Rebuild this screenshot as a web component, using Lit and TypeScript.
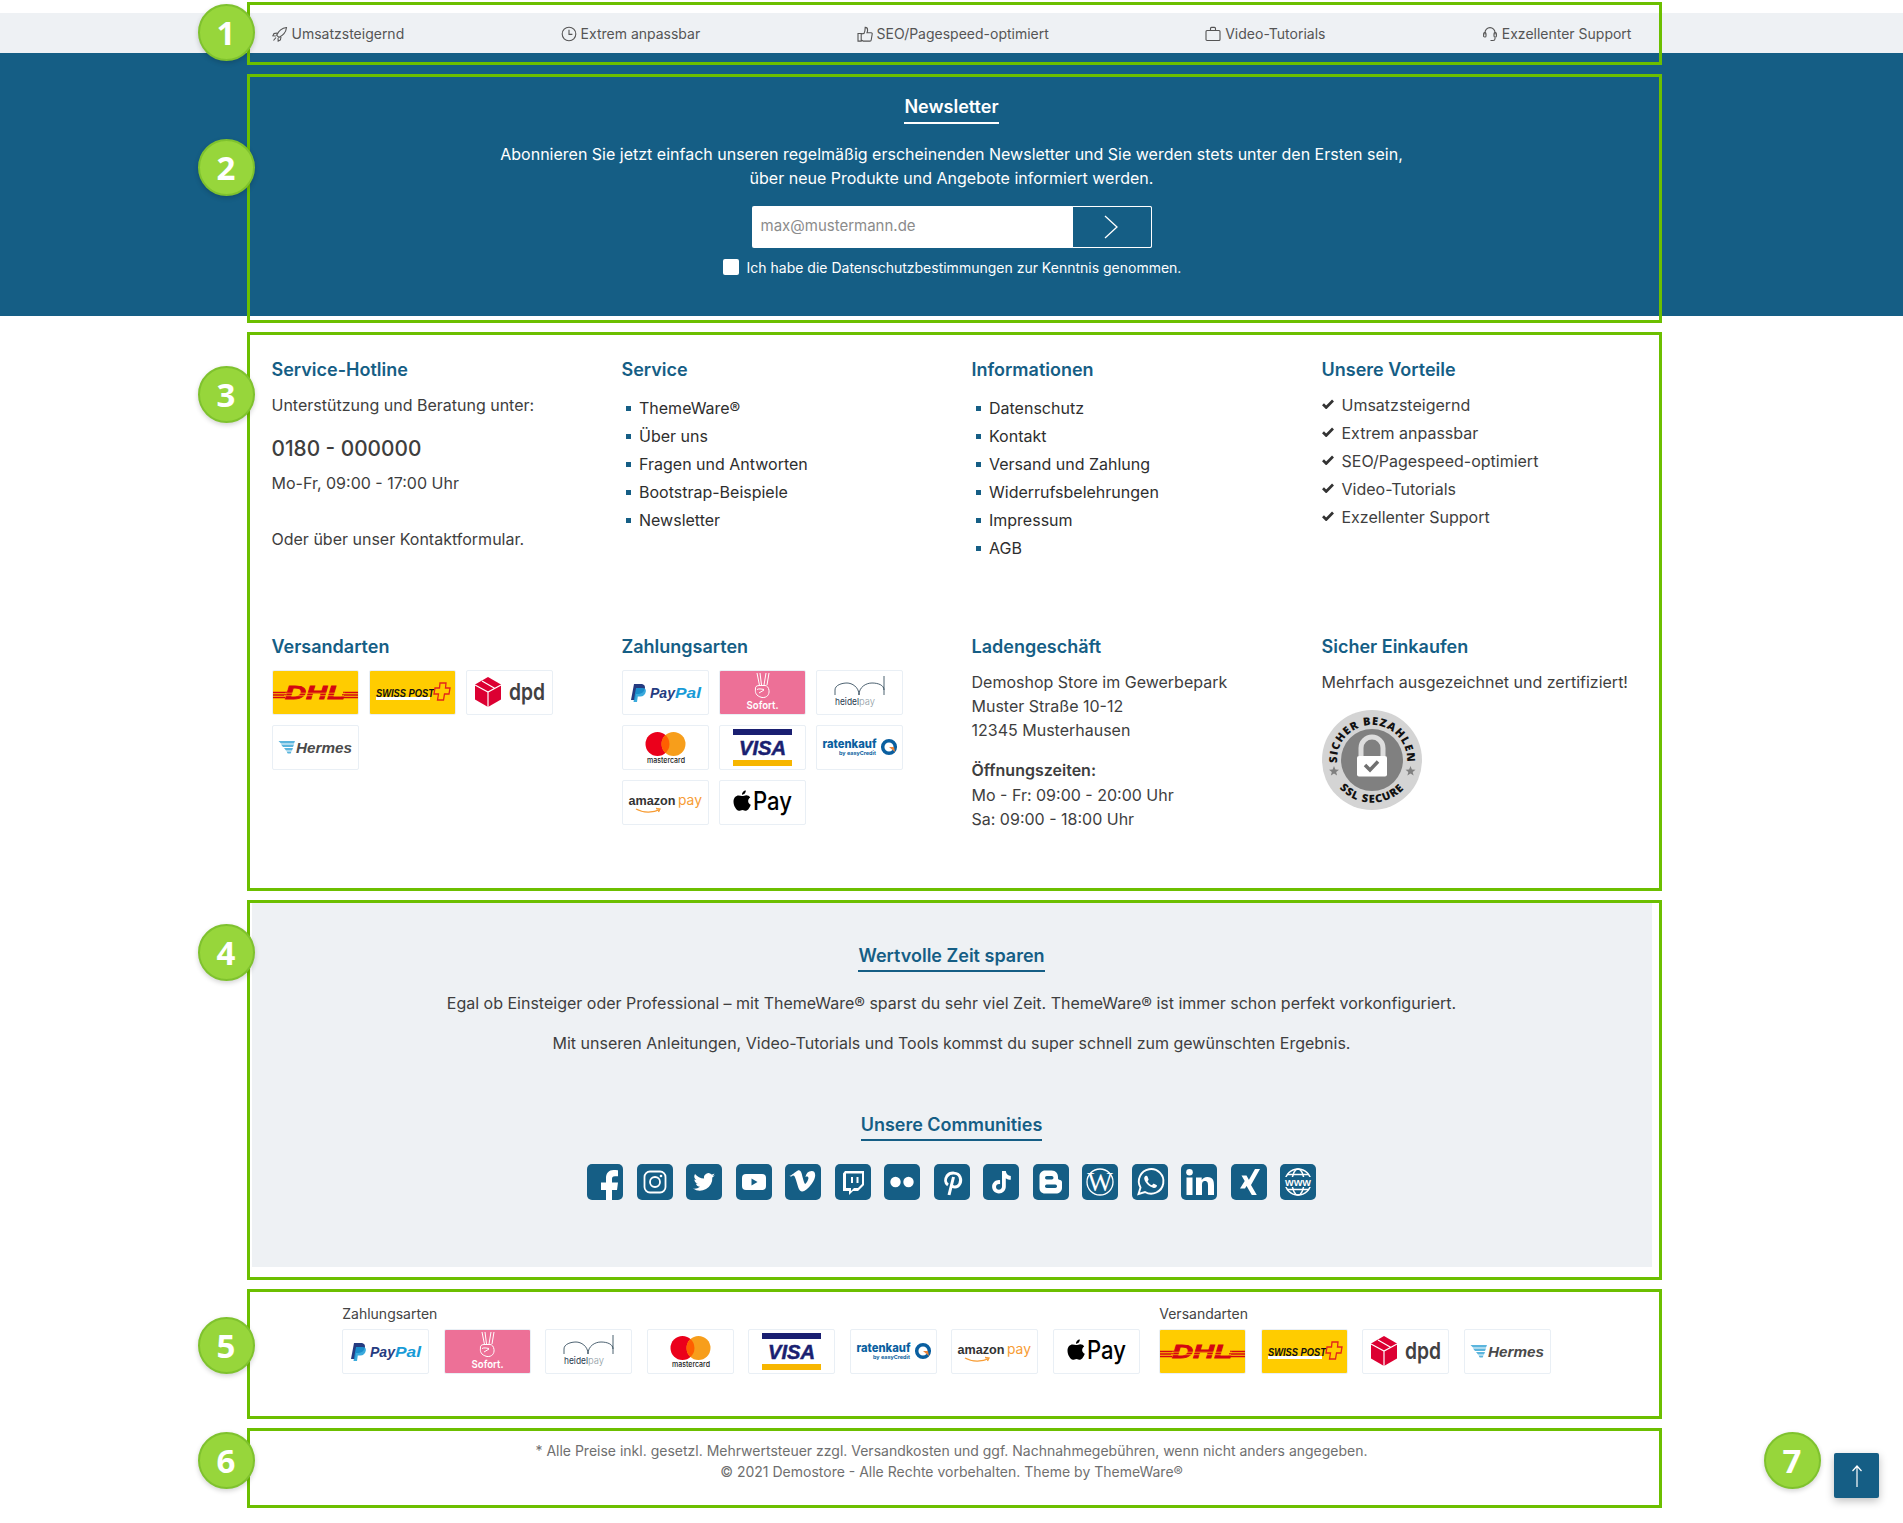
import { LitElement, html, css, svg } from "lit";
import { customElement } from "lit/decorators.js";

const BLUE = "#155e85";

const usp = [
  ["rocket", "Umsatzsteigernd"],
  ["clock", "Extrem anpassbar"],
  ["thumb", "SEO/Pagespeed-optimiert"],
  ["bag", "Video-Tutorials"],
  ["head", "Exzellenter Support"],
];

const uspIcon = (n: string) => {
  const p: Record<string, unknown> = {
    rocket: svg`<path d="M14.5 1.500C10 2 6.500 5 4.600 9.200l2.200 2.200C11 9.500 14 6 14.500 1.500zM5 7 2 7.600.9 9.800l3 .2M9 11l-.6 3-2.200 1.100-.2-3M4 11.500 1.500 14.500" />`,
    clock: svg`<circle cx="8" cy="8" r="6.800"/><path d="M8 3.800V8.400h3.400"/>`,
    thumb: svg`<path d="M1 7.500h3.200v7.600H1zM4.200 8l2.800-.6c.9-1.600 1.200-3.600 1.200-6 1.600 0 2.400 1 2.400 2.600 0 1-.3 2-.6 2.800h4.200c.6 0 1.100.5 1 1.200l-1 6c-.1.7-.6 1.100-1.200 1.100H6.200l-2-1"/>`,
    bag: svg`<rect x="1" y="4.500" width="14" height="10" rx="1"/><path d="M5.500 4.500V2.400c0-.6.4-1 1-1h3c.6 0 1 .4 1 1v2.100"/>`,
    head: svg`<path d="M3 8.500V6.600a5 5 0 0 1 10 0v1.900M13 11.500v1.200c0 1-1 1.800-2 1.800H8.500"/><rect x="1.600" y="6.600" width="2.400" height="4.400" rx="1.100"/><rect x="12" y="6.600" width="2.400" height="4.400" rx="1.100"/>`,
  };
  return svg`<svg class="uspi" viewBox="0 0 16 16" width="16" height="16" fill="none" stroke="#555" stroke-width="1.100">${p[n]}</svg>`;
};

const SANS = "Liberation Sans, sans-serif";
const INTER = "Inter, sans-serif";
const t = (x: number, y: number, s: string, size: number, fill: string, fam = SANS, weight = 700, style = "normal", len = 0) =>
  len
    ? svg`<text x=${x} y=${y} font-size=${size} fill=${fill} font-weight=${weight} font-style=${style} font-family=${fam} textLength=${len} lengthAdjust="spacingAndGlyphs">${s}</text>`
    : svg`<text x=${x} y=${y} font-size=${size} fill=${fill} font-weight=${weight} font-style=${style} font-family=${fam}>${s}</text>`;

const logos: Record<string, () => unknown> = {
  dhl: () => svg`<rect width="87" height="45" fill="#ffcc00"/>
    <g stroke="#d40511" stroke-width=".8">${t(13, 29, "DHL", 19, "#d40511", SANS, 700, "italic", 60)}</g>
    <path d="M0 22.500h15M0 25h14M0 27.500h13M71 22.500h16M70 25h17M69 27.500h18" stroke="#d40511" stroke-width="1.300"/>
    <path d="M13 23.200h60M12 25.700h60" stroke="#ffcc00" stroke-width=".7"/>`,
  swiss: () => svg`<rect width="87" height="45" fill="#ffcc00"/>
    <rect x="7" y="27" width="54" height="3" fill="#fff"/>
    ${t(7, 26.500, "SWISS POST", 10.500, "#111", SANS, 700, "italic", 58)}
    <path d="M71 13h6l-.5 5h4.500l-1 6h-4.500l-1 6h-6l1-6h-4.500l1-6h4.500z" fill="#ffcc00" stroke="#e2231a" stroke-width="1.300"/>`,
  dpd: () => svg`<path d="M22 7l13 7.500v15L22 37 9 29.500v-15z" fill="#dc0032"/>
    <path d="M9 15l13 7 13-7M22 22v15M16 11l13 7.500" stroke="#fff" stroke-width="1.200" fill="none"/>
    ${t(43, 30, "dpd", 23, "#414042", INTER, 600, "normal", 36)}`,
  hermes: () => svg`<path d="M6.500 16h16.500l-1 2.500H9zM9 19.500h13l-1 2.500H11zM12 23h9l-1 2.500h-6zM14.500 26.500h5l-.8 2h-3z" fill="#5bb5dd"/>
    ${t(24, 27.500, "Hermes", 15, "#4a4a4a", SANS, 700, "italic", 56)}`,
  paypal: () => svg`<path d="M9 30 12 14h6.500c3.500 0 5 1.700 4.400 4.600-.7 3.600-3 5.400-6.500 5.400h-2.500L13 30z" fill="#253b80"/>
    <path d="M11.500 32 14 18h6.500c2.800 0 3.800 1.500 3.300 3.800-.6 3-2.700 4.700-5.500 4.700h-2.500L15 32z" fill="#179bd7" opacity=".85"/>
    ${t(28, 28, "Pay", 15.500, "#253b80", SANS, 700, "italic", 25)}${t(53, 28, "Pal", 15.500, "#179bd7", SANS, 700, "italic", 26)}`,
  sofort: () => svg`<rect width="87" height="45" fill="#ed7097"/>
    <g fill="none" stroke="#fff" stroke-width="1">
      <path d="M38 3l2.500 12.500M41 3l1.500 12M50 3l-2 12M47 3l-2 12M36.500 19c-.5 3 0 7 6.500 8.500 5 .5 7.500-3 7-7-.3-3-2-5-4-5h-6c-3 0-4 2-3.500 3.500M38 19.500c2-1 4-.5 7 0M40 23l5-3"/>
    </g>
    ${t(27.500, 39, "Sofort.", 11, "#fff", INTER, 600, "normal", 32)}`,
  heidel: () => svg`<g fill="none" stroke="#1f3a4d" stroke-width=".8">
      <path d="M19 25V20C19 15 26 13 31 13S43 17 43 25C43 17 50 13 56 13S68 15 68 20M68 6V25"/>
    </g>
    ${t(19, 35, "heidel", 9.500, "#1f3a4d", INTER, 400, "normal", 24)}${t(43, 35, "pay", 9.500, "#8d9aa3", INTER, 300, "normal", 16)}`,
  master: () => svg`<circle cx="35.500" cy="19" r="12" fill="#eb001b"/><circle cx="51.500" cy="19" r="12" fill="#f79e1b"/>
    <path d="M43.500 10.100a12 12 0 0 1 0 17.800 12 12 0 0 1 0-17.800z" fill="#ff5f00"/>
    ${t(25, 38, "mastercard", 7.500, "#222", INTER, 500, "normal", 38)}`,
  visa: () => svg`<rect x="14" y="4" width="59" height="6" fill="#1a1f71"/><rect x="14" y="35" width="59" height="6" fill="#f7b600"/>
    <g stroke="#1a1f71" stroke-width=".5">${t(20, 30, "VISA", 20, "#1a1f71", SANS, 700, "italic", 47)}</g>`,
  rate: () => svg`${t(6.500, 23, "ratenkauf", 12, "#0a5fa0", INTER, 800, "normal", 54)}${t(23, 30, "by easyCredit", 5, "#0a5fa0", INTER, 700, "normal", 37)}
    <circle cx="73" cy="22" r="6.300" fill="none" stroke="#0a5fa0" stroke-width="3.500"/><path d="M73 22h5l1 5z" fill="#e8833a"/>`,
  amazon: () => svg`${t(6.500, 25, "amazon", 13, "#333", SANS, 700, "normal", 47)}${t(56, 25, "pay", 14, "#f79c34", INTER, 400, "normal", 24)}
    <path d="M14 29c7 4 17 4 24 .5M34 28.500l4 .5-1.500 3" fill="none" stroke="#f79c34" stroke-width="1.300"/>`,
  apple: () => svg`<g transform="translate(0 3.500)"><path d="M23 12.500c1.800 0 3-.8 4.200-.8 1.600 0 3.200.9 4 2.300-3 1.800-2.600 6 .6 7.300-.7 2-2.800 6-4.800 6-1.400 0-2-.9-3.500-.9s-2.300.9-3.600.9c-2.300 0-5.400-4.900-5.400-9 0-4 2.500-6.200 5-6.200 1.300 0 2.500.4 3.500.4zM26.800 7c.2 2.200-1.900 4.400-3.800 4.200-.2-2.100 1.900-4.200 3.800-4.200z" fill="#000"/></g>
    ${t(34, 30, "Pay", 25, "#000", INTER, 500, "normal", 39)}`,
};

const logoBox = (k: string) => html`<span class="logo"><svg viewBox="1 1 85 43" width="85" height="43">${logos[k]()}</svg></span>`;

const R = (c: unknown) => svg`<svg viewBox="0 0 36 36" width="36" height="36" class="soc"><rect width="36" height="36" rx="5" fill="${BLUE}"/>${c}</svg>`;
const W = "#fff";
const social = [
  svg`<path d="M19 36V26h-5v-7.500h5V14c0-5 3-8 7.500-8 1.800 0 3.500.1 4.500.3v6h-3c-2.500 0-3 1.200-3 3v3.200H31l-1 7.500h-5V36z" fill=${W}/>`,
  svg`<rect x="7.500" y="7.500" width="21" height="21" rx="5.500" fill="none" stroke=${W} stroke-width="1.800"/><circle cx="18" cy="18" r="5" fill="none" stroke=${W} stroke-width="1.800"/><circle cx="24" cy="12" r="1.300" fill=${W}/>`,
  svg`<path d="M29 11.200c-.8.4-1.700.6-2.500.7.900-.5 1.600-1.400 1.900-2.400-.9.500-1.800.9-2.800 1.100a4.400 4.400 0 0 0-7.500 4c-3.700-.2-6.900-2-9.100-4.600a4.400 4.400 0 0 0 1.400 5.900c-.7 0-1.400-.2-2-.5 0 2.100 1.500 3.900 3.500 4.300-.6.200-1.300.2-2 .1.600 1.700 2.200 3 4.100 3A8.800 8.800 0 0 1 7 24.600a12.500 12.500 0 0 0 19.300-11.100c.9-.6 1.600-1.400 2.700-2.300z" fill=${W}/>`,
  svg`<rect x="6" y="10" width="24" height="16" rx="4" fill=${W}/><path d="M15.500 14.500v7l6-3.500z" fill="${BLUE}"/>`,
  svg`<path d="M5.500 12.800 7 14.700c1.500-1 2.400-1.500 2.800-1.500 1 0 2 1.600 2.900 4.800l2.500 8.300c1.200 3.200 2.700 4.800 4.400 4.800 2.900 0 6.400-2.700 10.500-8.200 2.800-4 4-7.300 4-9.900 0-3.300-1.200-4.800-3.900-4.800-3.800 0-6 2.300-7 6.800 1.800-1 3.400-.6 3.400 1.400 0 1.300-2.300 6.200-3.500 6.200-1 0-1.600-2.100-2.900-7-.9-3.500-1.400-8-4.400-8-1.300 0-5 3-8.800 5.900z" fill=${W} transform="translate(-.500 -.500) scale(.9)"/>`,
  svg`<path d="M8 9.500 10 7H29V21L23 27H18L14 31V27H8ZM11 9.500V24H16V27L19 24H23L27 20V9.500Z" fill=${W} fill-rule="evenodd"/><path d="M16 13h2v6h-2zM21.500 13h2v6h-2z" fill=${W}/>`,
  svg`<circle cx="11.500" cy="18" r="5.200" fill=${W}/><circle cx="24.500" cy="18" r="5.200" fill=${W}/>`,
  svg`<path d="M14 21c-3-2-3-6-1-9 3-4 11-4 13 1 2 5-1 10-5 10-2 0-3-1-3-2M19.500 13 15 31" fill="none" stroke=${W} stroke-width="3"/>`,
  svg`<path d="M19 7h3.800c.3 2.900 2.200 4.700 5 4.900v3.900c-1.900 0-3.500-.6-5-1.600v8.200c0 4-3 7-6.900 7-3.800 0-6.800-3-6.800-6.600 0-4.200 3.700-7.300 8-6.600v4c-2.200-.6-4.100.8-4.100 2.700 0 1.600 1.300 2.800 2.900 2.800 1.800 0 3.100-1.400 3.100-3.300z" fill=${W}/>`,
  svg`<path d="M12 6.500h6.500C23 6.500 25 9.500 25 13v1.500c0 1 1 1.200 2 1.500 1.300.3 2 1 2 2.200V24c0 3.500-3 5.500-6 5.500H12c-3.500 0-5.500-2.500-5.500-5.500V12c0-3 2.500-5.500 5.500-5.500z" fill=${W}/><rect x="12" y="12" width="8.500" height="3.500" rx="1.700" fill="${BLUE}"/><rect x="12" y="20.500" width="12" height="3.500" rx="1.700" fill="${BLUE}"/>`,
  svg`<circle cx="18" cy="18" r="13" fill="none" stroke=${W} stroke-width="1.300"/><text x="18" y="27" text-anchor="middle" font-family="Liberation Serif, serif" font-size="27" fill=${W}>W</text>`,
  svg`<path d="M6.500 30l2-6.500A12.300 12.300 0 1 1 13 28z" fill="none" stroke=${W} stroke-width="1.900"/><path d="M14 11.800c-1 .2-1.900 1.200-1.800 2.800.2 3.300 5 8.700 9.500 9.300 1.800.2 2.900-.8 3.200-2 .1-.5 0-.7-.4-.9l-2.600-1.200c-.4-.2-.6 0-.9.300l-1 1.200c-1.800-.6-3.700-2.400-4.500-4.100l.8-1c.3-.3.3-.6.200-1l-1-2.600c-.2-.6-.7-.7-1.500-.8z" fill=${W}/>`,
  svg`<circle cx="8.500" cy="8.200" r="3.300" fill=${W}/><rect x="5.500" y="13.500" width="6" height="17.500" fill=${W}/><path d="M15 13.500h5.700v2.600c.9-1.700 2.900-3.100 5.600-3.100 5.800 0 6.700 3.800 6.700 8.700V31h-6v-9c0-2.300-.1-4.900-3-4.900s-3 2.300-3 4.700V31h-6z" fill=${W}/>`,
  svg`<path d="M10.500 11.500h5l3 5.500-4.500 7.500h-5l4.700-7.500zM24 5h5l-9 16 5.800 10h-5L15 21z" fill=${W}/>`,
  svg`<circle cx="18" cy="18" r="13" fill="none" stroke=${W} stroke-width="1.500"/><ellipse cx="18" cy="18" rx="6" ry="13" fill="none" stroke=${W} stroke-width="1.500"/><rect x="3" y="13" width="30" height="10" fill="${BLUE}"/>${t(5, 21.500, "WWW", 9.500, W, SANS, 700, "normal", 26)}<path d="M7 10.500h22M7 25.500h22" stroke=${W} stroke-width="1.500"/>`,
];

const check = svg`<svg class="chk" viewBox="0 0 12 10" width="12" height="10"><path d="M1 5.200 4.200 8.500 11 1.500" fill="none" stroke="#333" stroke-width="2.700"/></svg>`;

const star = (x: number, y: number) => svg`<path transform="translate(${x} ${y})" d="M0-5 1.400-1.600 5-1.300 2.200 1 3.100 4.500 0 2.600-3.100 4.500-2.200 1-5-1.300-1.400-1.600z" fill="#808080"/>`;

const seal = svg`<svg viewBox="0 0 100 100" width="100" height="100" class="seal">
  <defs>
    <path id="arcTop" d="M17.100 62A35 35 0 1 1 82.900 62"/>
    <path id="arcBot" d="M7 58A44 44 0 0 0 93 58"/>
  </defs>
  <circle cx="50" cy="50" r="50" fill="#d4d4d4"/>
  <circle cx="50" cy="50" r="31" fill="#808080"/>
  <text font-family="Open Sans, sans-serif" font-size="11" font-weight="800" fill="#111" letter-spacing="1"><textPath href="#arcTop" startOffset="50%" text-anchor="middle">SICHER BEZAHLEN</textPath></text>
  <text font-family="Open Sans, sans-serif" font-size="11" font-weight="800" fill="#111" letter-spacing="1"><textPath href="#arcBot" startOffset="50%" text-anchor="middle">SSL SECURE</textPath></text>
  ${star(12, 61)}${star(88.500, 61)}
  <path d="M39 46V38a11 11 0 0 1 22 0v8" fill="none" stroke="#ddd" stroke-width="5"/>
  <rect x="35" y="46" width="30" height="20.500" rx="2" fill="#fff"/>
  <path d="M43 55l5 5 8-8.500" fill="none" stroke="#707070" stroke-width="3.500"/>
</svg>`;

const annotations = [
  [2, 65], [74, 323], [332, 891], [900, 1280], [1289, 1419], [1428, 1508],
];
const badges = [
  [226, 32, "1"], [226, 167, "2"], [226, 394, "3"], [226, 952, "4"], [226, 1345, "5"], [226, 1460, "6"], [1792, 1460, "7"],
];

@customElement("app-root")
export class AppRoot extends LitElement {
  static styles = css`
    :host { display: block; position: relative; height: 1523px; overflow: hidden; background: #fff; font-family: Inter, "Liberation Sans", sans-serif; font-size: 16px; line-height: 24px; color: #3e3e3e; }
    * { box-sizing: border-box; }
    .top-gap { height: 13px; }
    .uspbar { height: 40px; background: #eef1f4; display: flex; justify-content: center; }
    .usprow { width: 1400px; padding: 2px 20px 0; display: flex; justify-content: space-between; align-items: center; font-size: 14px; color: #555; }
    .uspitem { display: flex; align-items: center; gap: 4px; }
    .uspi { flex: none; }
    .news { height: 263px; background: #155e85; color: #fff; display: flex; flex-direction: column; align-items: center; padding-top: 42px; text-align: center; }
    .news-h { font-size: 18px; font-weight: 600; line-height: 24px; padding-bottom: 3px; border-bottom: 2px solid #fff; margin-bottom: 18px; }
    .news-p { font-size: 16px; line-height: 24px; margin: 0 0 16px; }
    .form { display: flex; width: 400px; height: 42px; background: #fff; border-radius: 2px; }
    .input { width: 320px; color: #8b8b8b; font-size: 15px; line-height: 40px; text-align: left; padding-left: 9px; }
    .send { width: 80px; background: #155e85; border: 1px solid #fff; border-radius: 0 2px 2px 0; display: flex; align-items: center; justify-content: center; padding-right: 2px; }
    .consent { display: flex; align-items: center; gap: 8px; margin-top: 11px; font-size: 14px; height: 18px; padding-left: 1px; }
    .box { width: 16px; height: 16px; background: #fff; border-radius: 2px; flex: none; margin-top: -2px; }
    .wrap { width: 1400px; margin: 0 auto; }
    .cols { padding: 42px 20px 0; display: grid; grid-template-columns: repeat(4, 330px); column-gap: 20px; row-gap: 73px; height: 587px; align-content: start; }
    h3 { margin: 0 0 11px; font-size: 18px; line-height: 24px; font-weight: 600; color: #155e85; }
    p { margin: 0; }
    .phone { font-size: 20.800px; font-weight: 500; line-height: 30px; margin: 17px 0 7px; }
    .mt { margin-top: 32px; }
    ul { list-style: none; margin: 0; padding: 0; }
    .links { padding-top: 1px; }
    .links li { height: 28px; line-height: 28px; padding-left: 17.500px; position: relative; color: #2e2e2e; }
    .links li::before { content: ""; width: 5px; height: 5px; background: #155e85; position: absolute; left: 4px; top: 12px; }
    .adv li { height: 28px; line-height: 24px; display: flex; gap: 8px; align-items: flex-start; padding-left: 0; }
    .chk { margin-top: 6px; }
    .logos { display: grid; grid-template-columns: repeat(3, 87px); gap: 10px; }
    .logo { width: 87px; height: 45px; border: 1px solid #e9eff5; border-radius: 2px; display: block; background: #fff; overflow: hidden; }
    .logo svg { display: block; }
    .seal { display: block; margin-top: 16px; }
    .bold { font-weight: 600; margin-top: 16px; margin-bottom: 1px; }
    .about { background: #eef1f4; height: 364px; display: flex; flex-direction: column; align-items: center; padding-top: 41px; }
    .about-h { font-size: 18px; font-weight: 600; color: #155e85; line-height: 24px; border-bottom: 2px solid #155e85; padding-bottom: 2px; }
    .about p { margin-top: 19px; }
    .about p.next { margin-top: 16px; }
    .about .h2 { margin-top: 58px; }
    .social { display: flex; gap: 13.500px; margin-top: 23px; }
    .soc { display: block; }
    .pay { margin-top: 37px; display: flex; justify-content: center; gap: 19.500px; padding-right: 10px; height: 95px; }
    .pay-label { font-size: 14px; line-height: 20px; color: #444; margin-bottom: 5px; }
    .pay-row { display: flex; gap: 14.500px; }
    .legal { text-align: center; color: #6f6f6f; font-size: 14px; line-height: 21px; padding-top: 41px; }
    .top { position: absolute; left: 1834px; top: 1453px; width: 45px; height: 45px; background: #155e85; border-radius: 2px; box-shadow: 0 3px 8px rgba(0,0,0,.25); display: flex; align-items: center; justify-content: center; }
    .ann { position: absolute; left: 247px; width: 1415px; border: 3px solid #6cbf00; pointer-events: none; }
    .badge { position: absolute; width: 57px; height: 57px; margin: -28.500px 0 0 -28.500px; border-radius: 50%; background: #97d63b; border: 2px solid #7fc22e; box-shadow: 0 2px 5px rgba(0,0,0,.18); color: #fff; font-size: 33px; font-weight: 700; display: flex; align-items: center; justify-content: center; font-family: "Open Sans", sans-serif; line-height: 1; }
  `;

  render() {
    const pays = ["paypal", "sofort", "heidel", "master", "visa", "rate", "amazon", "apple"];
    const ships = ["dhl", "swiss", "dpd", "hermes"];
    return html`
      <div class="top-gap"></div>
      <div class="uspbar"><div class="usprow">
        ${usp.map(([i, s]) => html`<div class="uspitem">${uspIcon(i)}<span>${s}</span></div>`)}
      </div></div>
      <section class="news">
        <div class="news-h">Newsletter</div>
        <p class="news-p">Abonnieren Sie jetzt einfach unseren regelmäßig erscheinenden Newsletter und Sie werden stets unter den Ersten sein,<br />über neue Produkte und Angebote informiert werden.</p>
        <div class="form"><div class="input">max@mustermann.de</div><div class="send"><svg width="14" height="24" viewBox="0 0 14 24"><path d="M1 1 13 12 1 23" fill="none" stroke="#fff" stroke-width="1.300"/></svg></div></div>
        <div class="consent"><span class="box"></span><span>Ich habe die Datenschutzbestimmungen zur Kenntnis genommen.</span></div>
      </section>
      <div class="wrap">
        <div class="cols">
          <div>
            <h3>Service-Hotline</h3>
            <p>Unterstützung und Beratung unter:</p>
            <div class="phone">0180 - 000000</div>
            <p>Mo-Fr, 09:00 - 17:00 Uhr</p>
            <p class="mt">Oder über unser Kontaktformular.</p>
          </div>
          <div>
            <h3>Service</h3>
            <ul class="links">${["ThemeWare®", "Über uns", "Fragen und Antworten", "Bootstrap-Beispiele", "Newsletter"].map((s) => html`<li>${s}</li>`)}</ul>
          </div>
          <div>
            <h3>Informationen</h3>
            <ul class="links">${["Datenschutz", "Kontakt", "Versand und Zahlung", "Widerrufsbelehrungen", "Impressum", "AGB"].map((s) => html`<li>${s}</li>`)}</ul>
          </div>
          <div>
            <h3>Unsere Vorteile</h3>
            <ul class="adv">${usp.map(([, s]) => html`<li>${check}<span>${s}</span></li>`)}</ul>
          </div>
          <div>
            <h3>Versandarten</h3>
            <div class="logos">${ships.map(logoBox)}</div>
          </div>
          <div>
            <h3>Zahlungsarten</h3>
            <div class="logos">${pays.map(logoBox)}</div>
          </div>
          <div>
            <h3>Ladengeschäft</h3>
            <p>Demoshop Store im Gewerbepark<br />Muster Straße 10-12<br />12345 Musterhausen</p>
            <p class="bold">Öffnungszeiten:</p>
            <p>Mo - Fr: 09:00 - 20:00 Uhr<br />Sa: 09:00 - 18:00 Uhr</p>
          </div>
          <div>
            <h3>Sicher Einkaufen</h3>
            <p>Mehrfach ausgezeichnet und zertifiziert!</p>
            ${seal}
          </div>
        </div>
        <section class="about">
          <div class="about-h">Wertvolle Zeit sparen</div>
          <p>Egal ob Einsteiger oder Professional – mit ThemeWare® sparst du sehr viel Zeit. ThemeWare® ist immer schon perfekt vorkonfiguriert.</p>
          <p class="next">Mit unseren Anleitungen, Video-Tutorials und Tools kommst du super schnell zum gewünschten Ergebnis.</p>
          <div class="about-h h2">Unsere Communities</div>
          <div class="social">${social.map(R)}</div>
        </section>
        <div class="pay">
          <div><div class="pay-label">Zahlungsarten</div><div class="pay-row">${pays.map(logoBox)}</div></div>
          <div><div class="pay-label">Versandarten</div><div class="pay-row">${ships.map(logoBox)}</div></div>
        </div>
        <div class="legal">* Alle Preise inkl. gesetzl. Mehrwertsteuer zzgl. Versandkosten und ggf. Nachnahmegebühren, wenn nicht anders angegeben.<br />© 2021 Demostore - Alle Rechte vorbehalten. Theme by ThemeWare®</div>
      </div>
      <div class="top"><svg width="12" height="24" viewBox="0 0 12 24"><path d="M6 23V2M1.500 7 6 2l4.500 5" fill="none" stroke="#fff" stroke-width="1.200"/></svg></div>
      ${annotations.map(([a, b]) => html`<div class="ann" style="top:${a}px;height:${b - a}px"></div>`)}
      ${badges.map(([x, y, s]) => html`<div class="badge" style="left:${x}px;top:${y}px">${s}</div>`)}
    `;
  }
}
